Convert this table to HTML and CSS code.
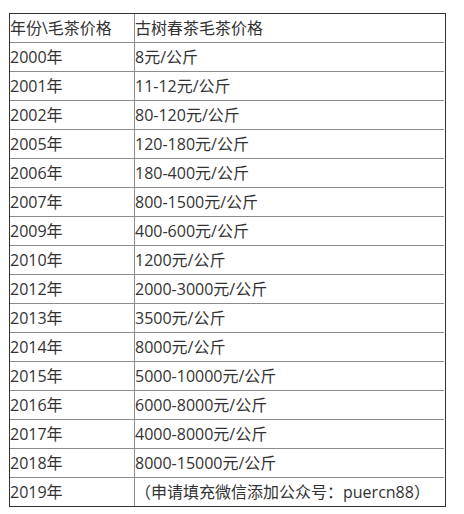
FILE: index.html
```html
<!DOCTYPE html>
<html lang="zh-CN">
<head>
<meta charset="utf-8">
<title>古树春茶毛茶价格</title>
<link rel="stylesheet" href="styles.css">
</head>
<body>
<div class="price-table">
  <div class="cell">年份\毛茶价格</div><div class="cell col2">古树春茶毛茶价格</div>
  <div class="cell row">2000年</div><div class="cell row col2">8元/公斤</div>
  <div class="cell row">2001年</div><div class="cell row col2">11-12元/公斤</div>
  <div class="cell row">2002年</div><div class="cell row col2">80-120元/公斤</div>
  <div class="cell row">2005年</div><div class="cell row col2">120-180元/公斤</div>
  <div class="cell row">2006年</div><div class="cell row col2">180-400元/公斤</div>
  <div class="cell row">2007年</div><div class="cell row col2">800-1500元/公斤</div>
  <div class="cell row">2009年</div><div class="cell row col2">400-600元/公斤</div>
  <div class="cell row">2010年</div><div class="cell row col2">1200元/公斤</div>
  <div class="cell row">2012年</div><div class="cell row col2">2000-3000元/公斤</div>
  <div class="cell row">2013年</div><div class="cell row col2">3500元/公斤</div>
  <div class="cell row">2014年</div><div class="cell row col2">8000元/公斤</div>
  <div class="cell row">2015年</div><div class="cell row col2">5000-10000元/公斤</div>
  <div class="cell row">2016年</div><div class="cell row col2">6000-8000元/公斤</div>
  <div class="cell row">2017年</div><div class="cell row col2">4000-8000元/公斤</div>
  <div class="cell row">2018年</div><div class="cell row col2">8000-15000元/公斤</div>
  <div class="cell row">2019年</div><div class="cell row col2">（申请填充微信添加公众号：puercn88）</div>
</div>
</body>
</html>
```
FILE: styles.css
```css
html, body {
  margin: 0;
  padding: 0;
  background: #ffffff;
}
body {
  padding: 13px 0 0 9px;
  font-family: "Open Sans", "Noto Sans CJK SC", sans-serif;
  font-size: 16px;
  color: #333333;
}
.price-table {
  display: grid;
  grid-template-columns: 124px 310px;
  width: 435px;
  border: 1px solid #333333;
}
.cell {
  height: 28px;
  line-height: 28px;
  padding: 0;
  white-space: nowrap;
  overflow: hidden;
}
.row {
  border-top: 1px solid #8c8c8c;
}
.col2 {
  border-left: 1px solid #8c8c8c;
}
```
